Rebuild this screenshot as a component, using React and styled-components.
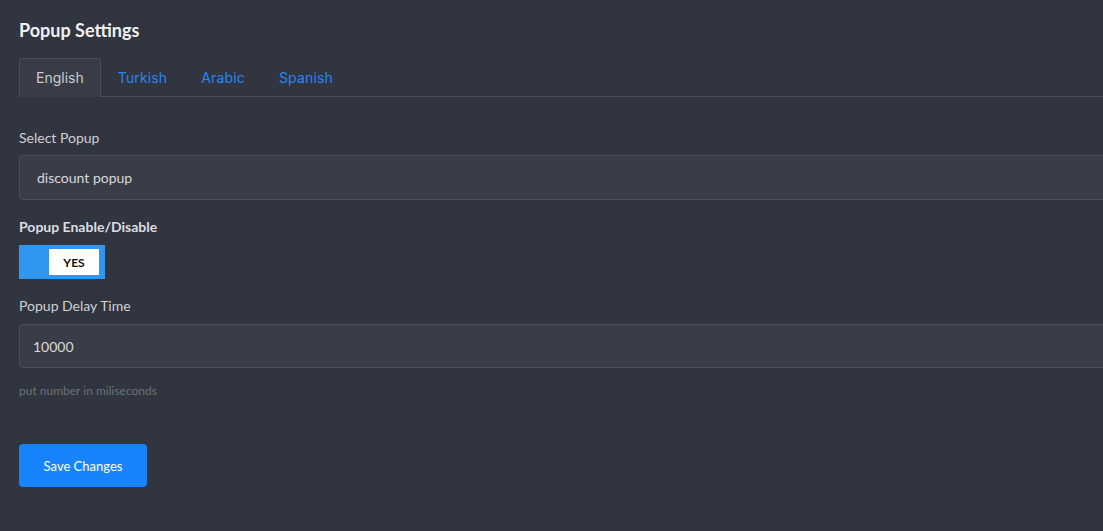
import React, { useState } from "react";
import styled, { createGlobalStyle } from "styled-components";

const Global = createGlobalStyle`
  html, body { margin: 0; padding: 0; background: #303540; }
  body { font-family: Lato, "Liberation Sans", sans-serif; }
  * { box-sizing: border-box; }
`;

const Page = styled.div`
  width: 1103px;
  height: 531px;
  background: #303540;
  padding: 19px 0 0 19px;
  overflow: hidden;
`;

const Title = styled.h2`
  margin: 0;
  font-family: Lato, sans-serif;
  font-weight: 700;
  font-size: 18px;
  line-height: 22px;
  color: #f2f2f2;
`;

const TabBar = styled.div`
  display: flex;
  margin-top: 17px;
  border-bottom: 1px solid #4b4f5a;
  width: 1100px;
`;

const Tab = styled.button`
  font-family: Inter, "Open Sans", sans-serif;
  font-size: 14px;
  letter-spacing: ${(p) => (p.$active ? "0" : "0.15px")};
  height: 39px;
  padding: 0 16px;
  margin-bottom: -1px;
  background: ${(p) => (p.$active ? "#393c47" : "transparent")};
  color: ${(p) => (p.$active ? "#c9cbd0" : "#2a86ee")};
  border: 1px solid ${(p) => (p.$active ? "#4b4f5a" : "transparent")};
  border-bottom-color: ${(p) => (p.$active ? "#393c47" : "transparent")};
  border-radius: 4px 4px 0 0;
  cursor: pointer;
`;

const Field = styled.div`
  display: flex;
  flex-direction: column;
  margin-top: ${(p) => p.$mt || 0}px;
`;

const Label = styled.label`
  font-family: Lato, sans-serif;
  font-size: 14px;
  line-height: 18px;
  font-weight: ${(p) => (p.$bold ? 700 : 400)};
  color: ${(p) => (p.$bold ? "#dcdde0" : "#cfd0d4")};
  margin-bottom: ${(p) => p.$mb || 8}px;
`;

const Input = styled.div`
  width: 1100px;
  height: ${(p) => p.$h || 45}px;
  display: flex;
  align-items: center;
  padding-left: ${(p) => p.$pl || 17}px;
  background: #3a3d48;
  border: 1px solid #4b4f5a;
  border-radius: 4px;
  font-family: Lato, sans-serif;
  font-size: 14px;
  color: #d8d9dc;
`;

const Toggle = styled.div`
  width: 86px;
  height: 34px;
  background: #2f97ef;
  padding: 4px 6px 4px 30px;
  display: flex;
`;

const ToggleKnob = styled.div`
  flex: 1;
  background: #ffffff;
  display: flex;
  align-items: center;
  justify-content: center;
  font-family: Lato, sans-serif;
  font-weight: 700;
  font-size: 12px;
  color: #111;
`;

const Help = styled.div`
  margin-top: 15px;
  font-family: Lato, sans-serif;
  font-size: 12px;
  color: #6d717a;
`;

const SaveButton = styled.button`
  margin-top: 46px;
  width: 128px;
  height: 43px;
  background: #1784fb;
  border: none;
  border-radius: 4px;
  color: #ffffff;
  font-family: Lato, sans-serif;
  font-size: 13px;
  cursor: pointer;
`;

export default function App() {
  const [tab, setTab] = useState("English");
  const tabs = ["English", "Turkish", "Arabic", "Spanish"];
  return (
    <Page>
      <Global />
      <Title>Popup Settings</Title>
      <TabBar>
        {tabs.map((t) => (
          <Tab key={t} $active={tab === t} onClick={() => setTab(t)}>
            {t}
          </Tab>
        ))}
      </TabBar>
      <Field $mt={32}>
        <Label>Select Popup</Label>
        <Input>discount popup</Input>
      </Field>
      <Field $mt={18}>
        <Label $bold $mb={9}>Popup Enable/Disable</Label>
        <Toggle>
          <ToggleKnob>YES</ToggleKnob>
        </Toggle>
      </Field>
      <Field $mt={18}>
        <Label $mb={9}>Popup Delay Time</Label>
        <Input $pl={13} $h={44}>10000</Input>
      </Field>
      <Help>put number in miliseconds</Help>
      <SaveButton>Save Changes</SaveButton>
    </Page>
  );
}
